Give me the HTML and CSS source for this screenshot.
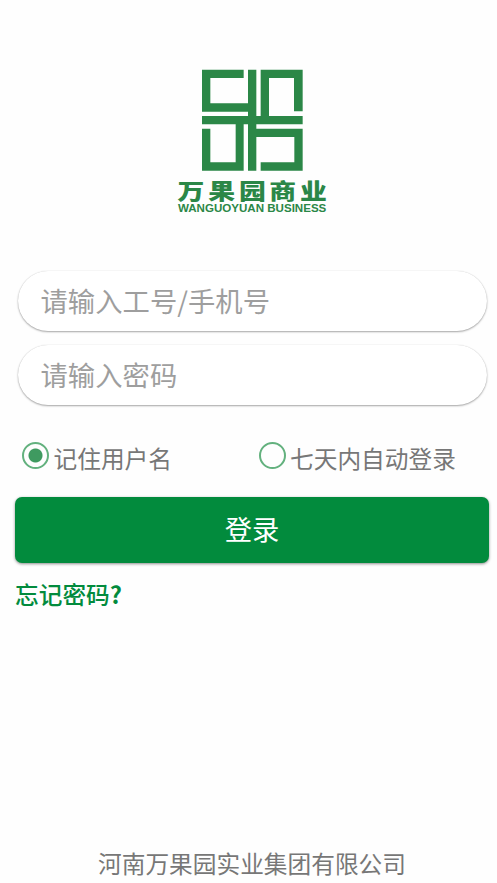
FILE: index.html
```html
<!DOCTYPE html>
<html lang="zh-CN">
<head>
<meta charset="utf-8">
<title>万果园商业</title>
<link rel="stylesheet" href="styles.css">
</head>
<body>
<main class="page">
  <svg class="logo" viewBox="0 0 495 480">
    <path d="M221 29H96V155H234V168H96V193H197V307H121V206H96V332H221V193H234V332H259V231H373V307H272V332H398V206H259V193H398V168H297V54H372V154H398V29H272V168H259V29H234V130H121V54H221Z"/>
    <text class="brand" transform="translate(0 417) scale(1.06 .86)" y="0" x="21 108.500 195 281 368">万果园商业</text>
    <text class="brand-en" x="24" y="456" textLength="445" lengthAdjust="spacingAndGlyphs">WANGUOYUAN BUSINESS</text>
  </svg>
  <form class="form">
    <input class="field" type="text" placeholder="请输入工号/手机号">
    <input class="field" type="password" placeholder="请输入密码">
    <div class="options">
      <label class="option"><input class="radio" type="radio" name="remember" checked><span>记住用户名</span></label>
      <label class="option"><input class="radio" type="radio" name="auto"><span>七天内自动登录</span></label>
    </div>
    <button class="submit" type="button">登录</button>
    <a class="forgot">忘记密码<span class="mark">?</span></a>
  </form>
  <footer class="footer">河南万果园实业集团有限公司</footer>
</main>
</body>
</html>
```
FILE: styles.css
```css
* {
  box-sizing: border-box;
}

body {
  margin: 0;
  background: #fefefe;
  color: #777;
  font-family: "Noto Sans CJK SC", sans-serif;
  font-size: 23.7px;
}

.page {
  display: flex;
  flex-direction: column;
  height: 883px;
  padding: 60px 8px 0 15px;
  overflow: hidden;
}

.logo {
  flex: none;
  width: 165px;
  height: 160px;
  margin-left: 155px;
  fill: #2b8747;
}

.brand {
  font-size: 76px;
  font-weight: 900;
}

.brand-en {
  font-family: "Liberation Sans", sans-serif;
  font-size: 33px;
  font-weight: 700;
}

.form {
  display: flex;
  flex-direction: column;
  margin-top: 51.4px;
}

.field {
  height: 60px;
  margin: 0 2.5px 14px;
  padding: 0 23px 2px;
  border: 0;
  border-radius: 30px;
  background: #fff;
  box-shadow: 0 1px 2px rgba(0, 0, 0, .34), 0 0 1px rgba(0, 0, 0, .16);
  font: 27.3px "Noto Sans CJK SC", sans-serif;
  letter-spacing: .05px;
  outline: 0;
}

.field::placeholder {
  color: #9e9e9e;
  opacity: 1;
}

.options {
  display: grid;
  grid-template-columns: 1fr 1fr;
  height: 77.6px;
  padding: 18.6px 0 0 7px;
}

.option {
  display: flex;
  gap: 4.5px;
  line-height: 40px;
  white-space: nowrap;
}

.option:last-child {
  padding-left: 3px;
}

.radio {
  appearance: none;
  flex: none;
  width: 27px;
  height: 27px;
  margin: 4px 0 0;
  border: 2px solid #63b17e;
  border-radius: 50%;
}

.radio:checked {
  background: radial-gradient(circle, #3f9a60 6.5px, transparent 7.5px);
}

.submit {
  height: 66.5px;
  padding: 0 0 4px;
  border: 0;
  border-radius: 7px;
  background: #028b3d;
  box-shadow: 0 1px 3px rgba(0, 0, 0, .45);
  color: #fff;
  font: 27.3px "Noto Sans CJK SC", sans-serif;
}

.forgot {
  margin-top: 10.5px;
  color: #028b3d;
  font-weight: 500;
  line-height: 40px;
}

.mark {
  font-weight: 700;
}

.footer {
  margin-top: auto;
  line-height: 40px;
  text-align: center;
}
```
